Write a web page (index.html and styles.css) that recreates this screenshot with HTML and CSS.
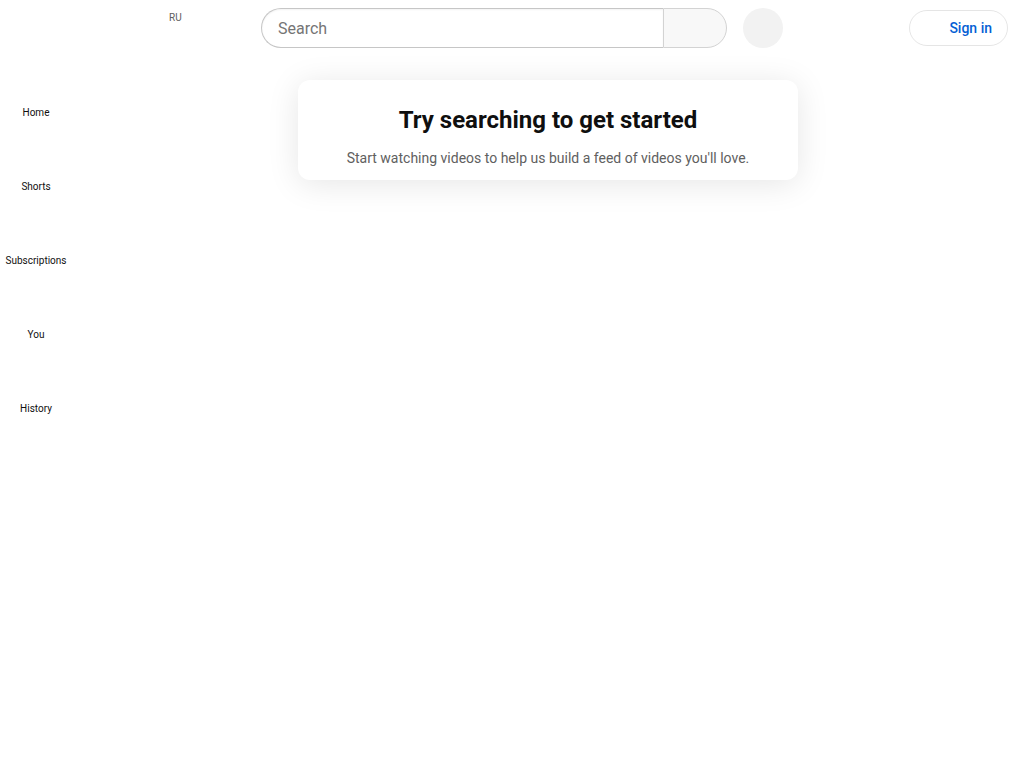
FILE: index.html
```html
<!DOCTYPE html>
<html lang="en">
<head>
<meta charset="utf-8">
<title>YouTube</title>
<link rel="stylesheet" href="styles.css">
</head>
<body>
<header class="masthead">
  <div class="start">
    <div class="logo-slot"></div>
    <span class="country">RU</span>
  </div>
  <div class="center">
    <div class="searchbox">
      <div class="search-input"><span class="placeholder">Search</span></div>
      <div class="search-btn"></div>
    </div>
    <div class="mic-btn"></div>
  </div>
  <div class="end">
    <div class="signin"><span class="signin-icon"></span><span class="signin-text">Sign in</span></div>
  </div>
</header>
<div class="page">
  <nav class="mini-guide">
    <div class="guide-item"><span class="guide-icon"></span><span class="guide-label">Home</span></div>
    <div class="guide-item"><span class="guide-icon"></span><span class="guide-label">Shorts</span></div>
    <div class="guide-item"><span class="guide-icon"></span><span class="guide-label">Subscriptions</span></div>
    <div class="guide-item"><span class="guide-icon"></span><span class="guide-label">You</span></div>
    <div class="guide-item"><span class="guide-icon"></span><span class="guide-label">History</span></div>
  </nav>
  <main class="content">
    <section class="card">
      <h1 class="card-title">Try searching to get started</h1>
      <p class="card-sub">Start watching videos to help us build a feed of videos you'll love.</p>
    </section>
  </main>
</div>
</body>
</html>
```
FILE: styles.css
```css
html, body {
  margin: 0;
  padding: 0;
  background: #ffffff;
  font-family: Roboto, "Liberation Sans", Arial, sans-serif;
  color: #0f0f0f;
}

.masthead {
  height: 56px;
  display: flex;
  align-items: center;
  padding: 0 16px 0 16px;
  box-sizing: border-box;
}

.start {
  width: 245px;
  height: 56px;
  position: relative;
  flex: none;
}

.country {
  position: absolute;
  left: 153px;
  top: 11px;
  font-size: 10px;
  line-height: 14px;
  color: #606060;
}

.center {
  display: flex;
  align-items: center;
  gap: 16px;
  flex: none;
}

.searchbox {
  display: flex;
  height: 40px;
}

.search-input {
  width: 402px;
  height: 40px;
  box-sizing: border-box;
  border: 1px solid #c6c6c6;
  border-right: none;
  border-radius: 40px 0 0 40px;
  padding: 0 4px 0 16px;
  display: flex;
  align-items: center;
  box-shadow: inset 0 1px 2px rgba(0,0,0,0.05);
}

.placeholder {
  font-size: 16px;
  color: #757575;
}

.search-btn {
  width: 64px;
  height: 40px;
  box-sizing: border-box;
  border: 1px solid #d3d3d3;
  border-radius: 0 40px 40px 0;
  background: #f8f8f8;
}

.mic-btn {
  width: 40px;
  height: 40px;
  border-radius: 50%;
  background: #f2f2f2;
}

.end {
  margin-left: auto;
  display: flex;
  align-items: center;
}

.signin {
  height: 36px;
  box-sizing: border-box;
  border: 1px solid rgba(0,0,0,0.1);
  border-radius: 18px;
  padding: 0 15px 0 9px;
  display: flex;
  align-items: center;
}

.signin-icon {
  width: 24px;
  height: 24px;
  margin-right: 6px;
}

.signin-text {
  font-size: 14px;
  font-weight: 500;
  color: #065fd4;
}

.page {
  display: flex;
  align-items: flex-start;
}

.mini-guide {
  width: 72px;
  flex: none;
  padding-top: 4px;
  display: flex;
  flex-direction: column;
}

.guide-item {
  height: 74px;
  box-sizing: border-box;
  padding: 16px 0 14px;
  display: flex;
  flex-direction: column;
  align-items: center;
}

.guide-icon {
  width: 24px;
  height: 24px;
  flex: none;
}

.guide-label {
  margin-top: 6px;
  font-size: 10px;
  line-height: 14px;
  color: #0f0f0f;
  white-space: nowrap;
}

.content {
  flex: 1;
  display: flex;
  justify-content: center;
  align-items: flex-start;
  padding-top: 24px;
}

.card {
  width: 500px;
  box-sizing: border-box;
  padding: 24px 24px 12px;
  border-radius: 12px;
  background: #ffffff;
  box-shadow: 0 4px 32px rgba(0,0,0,0.1);
  text-align: center;
}

.card-title {
  margin: 0;
  font-size: 24px;
  line-height: 32px;
  font-weight: 700;
  color: #0f0f0f;
}

.card-sub {
  margin: 12px 0 0;
  font-size: 14px;
  line-height: 20px;
  color: #606060;
}
```
